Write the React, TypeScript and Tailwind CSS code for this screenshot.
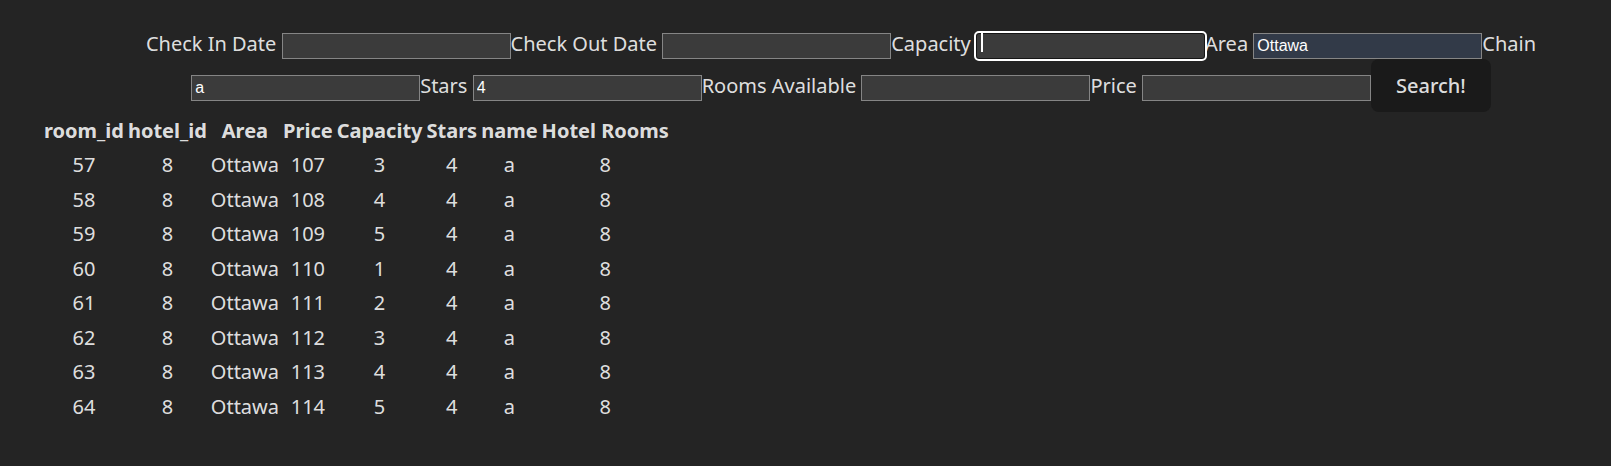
import React from 'react';

const rows = [
  { room: 57, price: 107, cap: 3 },
  { room: 58, price: 108, cap: 4 },
  { room: 59, price: 109, cap: 5 },
  { room: 60, price: 110, cap: 1 },
  { room: 61, price: 111, cap: 2 },
  { room: 62, price: 112, cap: 3 },
  { room: 63, price: 113, cap: 4 },
  { room: 64, price: 114, cap: 5 },
];

const headers = ['room_id', 'hotel_id', 'Area', 'Price', 'Capacity', 'Stars', 'name', 'Hotel Rooms'];

const inputCls =
  'inline-block align-baseline w-[229px] h-[26px] px-[3px] border bg-[#3b3b3b] text-white text-[16px] leading-[18px] font-["Liberation_Sans",Arial,sans-serif]';

const Field: React.FC<{ value?: string; autofill?: boolean }> = ({ value = '', autofill }) => (
  <input
    readOnly
    value={value}
    className={`${inputCls} outline-none border-[#858585] ${autofill ? 'bg-[#323a48]' : ''}`}
  />
);

const App: React.FC = () => {
  return (
    <div className='min-h-screen bg-[#242424] text-[rgba(255,255,255,0.87)] font-["Noto_Sans",sans-serif] text-[20px] leading-[1.5]'>
      {/* Search form */}
      <form className="pt-[29px] pl-[71px] text-center" onSubmit={(e) => e.preventDefault()}>
        <div className="whitespace-nowrap h-[30px]">
          Check In Date <Field />
          Check Out Date <Field />
          Capacity{' '}
          <span className="relative inline-block align-baseline">
            <input
              readOnly
              className={`${inputCls} border-[#161616] rounded-[3px] outline-2 outline-solid outline-white outline-offset-0`}
            />
            <span className="absolute left-[5px] top-[4px] w-[2px] h-[19px] bg-white" />
          </span>
          Area <Field value="Ottawa" autofill />
          Chain
        </div>
        <div className="whitespace-nowrap h-[53px]">
          <Field value="a" />
          Stars <Field value="4" />
          Rooms Available <Field />
          Price <Field />
          <button
            type="submit"
            className="inline-block align-baseline h-[53px] px-[24px] rounded-lg border border-transparent bg-[#1a1a1a] font-medium text-[20px] text-[rgba(255,255,255,0.87)]"
          >
            Search!
          </button>
        </div>
      </form>

      {/* Results */}
      <table className="ml-[41px] border-separate border-spacing-[2px]">
        <thead>
          <tr>
            {headers.map((h) => (
              <th key={h} className="px-[1px] py-[1px] font-bold leading-[31px] text-center">
                {h}
              </th>
            ))}
          </tr>
        </thead>
        <tbody>
          {rows.map((r) => (
            <tr key={r.room}>
              {[r.room, 8, 'Ottawa', r.price, r.cap, 4, 'a', 8].map((v, i) => (
                <td key={i} className="px-[1px] py-[1px] leading-[30.5px] text-center">
                  {v}
                </td>
              ))}
            </tr>
          ))}
        </tbody>
      </table>
    </div>
  );
};

export default App;
